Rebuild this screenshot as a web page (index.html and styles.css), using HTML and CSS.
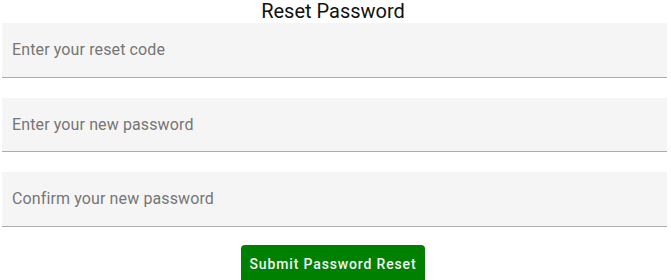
FILE: index.html
```html
<!DOCTYPE html>
<html lang="en">
<head>
    <meta charset="UTF-8">
    <meta name="viewport" content="width=device-width, initial-scale=1.0">
    <title>Reset Password</title>
    <link rel="stylesheet" href="styles.css">
</head>
<body>
    <div class="container">
        <h2>Reset Password</h2>
        <form class="reset-form" onsubmit="return false;">
            <input type="text" class="field" placeholder="Enter your reset code">
            <input type="password" class="field" placeholder="Enter your new password">
            <input type="password" class="field" placeholder="Confirm your new password">
            <div class="button-row">
                <button type="submit" class="submit-button">Submit Password Reset</button>
            </div>
        </form>
    </div>
</body>
</html>
```

FILE: styles.css
```css
body {
    font-family: Roboto, 'Liberation Sans', Arial, sans-serif;
    margin: 0;
    padding: 0 4px 0 2px;
    background-color: #fff;
    color: #222;
}
.container {
    display: flex;
    flex-direction: column;
}
h2 {
    margin: 0;
    padding-right: 3px;
    font-size: 20px;
    font-weight: 400;
    line-height: 23px;
    text-align: center;
    color: #111;
}
.reset-form {
    display: flex;
    flex-direction: column;
    gap: 20px;
}
.field {
    box-sizing: border-box;
    width: 100%;
    height: 54.5px;
    padding: 0 10px;
    border: none;
    border-bottom: 1px solid #adadad;
    background-color: #f5f5f5;
    font-family: inherit;
    font-size: 16px;
    letter-spacing: 0.12px;
    color: #333;
}
.field::placeholder {
    color: #767676;
}
.field:focus {
    outline: none;
    border-bottom-color: #008000;
}
.button-row {
    display: flex;
    justify-content: center;
    margin-top: -1.5px;
    padding-right: 3px;
}
.submit-button {
    padding: 10px 9px;
    border: none;
    border-radius: 4px;
    background-color: #008000;
    color: #f2f2f2;
    font-family: inherit;
    font-size: 14px;
    font-weight: 500;
    letter-spacing: 0.85px;
    line-height: 18px;
    cursor: pointer;
}
.submit-button:hover {
    background-color: #006400;
}
```
